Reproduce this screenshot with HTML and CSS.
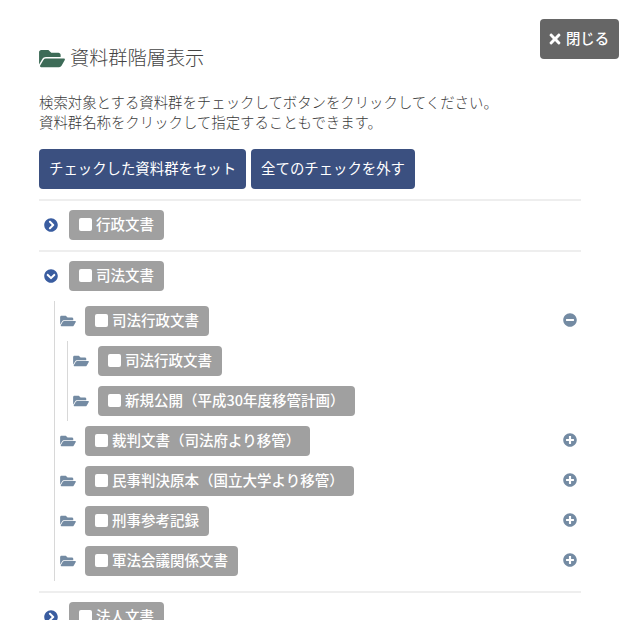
FILE: index.html
```html
<!DOCTYPE html>
<html lang="ja">
<head>
    <meta charset="UTF-8">
    <title>資料群階層表示</title>
    <link rel="stylesheet" href="styles.css">
</head>
<body>
    <svg class="sprite" xmlns="http://www.w3.org/2000/svg">
        <symbol id="i-folder" viewBox="0 0 576 512"><path d="M572.694 292.093L500.27 416.248A63.997 63.997 0 0 1 444.989 448H45.025c-18.523 0-30.064-20.093-20.731-36.093l72.424-124.155A64 64 0 0 1 152 256h399.964c18.523 0 30.064 20.093 20.73 36.093zM152 224h328v-48c0-26.51-21.49-48-48-48H272l-64-64H48C21.49 64 0 85.49 0 112v278.046l69.077-118.418C86.214 242.25 117.989 224 152 224z"/></symbol>
        <symbol id="i-right" viewBox="0 0 512 512"><path d="M256 8c137 0 248 111 248 248S393 504 256 504 8 393 8 256 119 8 256 8zm113.9 231L234.4 103.5c-9.4-9.4-24.6-9.4-33.9 0l-17 17c-9.4 9.4-9.4 24.6 0 33.9L285.1 256 183.5 357.6c-9.4 9.4-9.4 24.6 0 33.9l17 17c9.4 9.4 24.6 9.4 33.9 0L369.9 273c9.4-9.4 9.4-24.6 0-34z"/></symbol>
        <symbol id="i-down" viewBox="0 0 512 512"><path d="M504 256c0 137-111 248-248 248S8 393 8 256 119 8 256 8s248 111 248 248zM273 369.9l135.5-135.5c9.4-9.4 9.4-24.6 0-33.9l-17-17c-9.4-9.4-24.6-9.4-33.9 0L256 285.1 154.4 183.5c-9.4-9.4-24.6-9.4-33.9 0l-17 17c-9.4 9.4-9.4 24.6 0 33.9L239 369.9c9.4 9.4 24.6 9.4 34 0z"/></symbol>
        <symbol id="i-plus" viewBox="0 0 512 512"><path d="M256 8C119 8 8 119 8 256s111 248 248 248 248-111 248-248S393 8 256 8zm144 276c0 6.6-5.4 12-12 12h-92v92c0 6.6-5.4 12-12 12h-56c-6.6 0-12-5.4-12-12v-92h-92c-6.6 0-12-5.4-12-12v-56c0-6.6 5.4-12 12-12h92v-92c0-6.6 5.4-12 12-12h56c6.6 0 12 5.4 12 12v92h92c6.6 0 12 5.4 12 12v56z"/></symbol>
        <symbol id="i-minus" viewBox="0 0 512 512"><path d="M256 8C119 8 8 119 8 256s111 248 248 248 248-111 248-248S393 8 256 8zM124 296c-6.6 0-12-5.4-12-12v-56c0-6.6 5.4-12 12-12h264c6.6 0 12 5.4 12 12v56c0 6.6-5.4 12-12 12H124z"/></symbol>
        <symbol id="i-times" viewBox="0 0 352 512"><path d="M242.72 256l100.07-100.07c12.28-12.28 12.28-32.19 0-44.48l-22.24-22.24c-12.28-12.28-32.19-12.28-44.48 0L176 189.28 75.93 89.21c-12.28-12.28-32.19-12.28-44.48 0L9.21 111.45c-12.28 12.28-12.28 32.19 0 44.48L109.28 256 9.21 356.07c-12.28 12.28-12.28 32.19 0 44.48l22.24 22.24c12.28 12.28 32.2 12.28 44.48 0L176 322.72l100.07 100.07c12.28 12.28 32.2 12.28 44.48 0l22.24-22.24c12.28-12.28 12.28-32.19 0-44.48L242.72 256z"/></symbol>
    </svg>

    <button class="close-btn" type="button"><svg class="close-icon"><use href="#i-times"/></svg>閉じる</button>

    <h2 class="title"><svg class="title-icon"><use href="#i-folder"/></svg>資料群階層表示</h2>

    <p class="intro">検索対象とする資料群をチェックしてボタンをクリックしてください。<br>資料群名称をクリックして指定することもできます。</p>

    <div class="actions">
        <button class="btn" type="button">チェックした資料群をセット</button>
        <button class="btn" type="button">全てのチェックを外す</button>
    </div>

    <ul class="tree">
        <li class="top">
            <div class="row">
                <svg class="toggle"><use href="#i-right"/></svg>
                <span class="tag"><span class="check"></span>行政文書</span>
            </div>
        </li>
        <li class="top">
            <div class="row">
                <svg class="toggle"><use href="#i-down"/></svg>
                <span class="tag"><span class="check"></span>司法文書</span>
            </div>
            <ul class="sub">
                <li>
                    <div class="row">
                        <svg class="folder"><use href="#i-folder"/></svg>
                        <span class="tag"><span class="check"></span>司法行政文書</span>
                        <svg class="expand"><use href="#i-minus"/></svg>
                    </div>
                    <ul class="sub nested">
                        <li>
                            <div class="row">
                                <svg class="folder"><use href="#i-folder"/></svg>
                                <span class="tag"><span class="check"></span>司法行政文書</span>
                            </div>
                        </li>
                        <li>
                            <div class="row">
                                <svg class="folder"><use href="#i-folder"/></svg>
                                <span class="tag"><span class="check"></span>新規公開（平成30年度移管計画）</span>
                            </div>
                        </li>
                    </ul>
                </li>
                <li>
                    <div class="row">
                        <svg class="folder"><use href="#i-folder"/></svg>
                        <span class="tag"><span class="check"></span>裁判文書（司法府より移管）</span>
                        <svg class="expand"><use href="#i-plus"/></svg>
                    </div>
                </li>
                <li>
                    <div class="row">
                        <svg class="folder"><use href="#i-folder"/></svg>
                        <span class="tag"><span class="check"></span>民事判決原本（国立大学より移管）</span>
                        <svg class="expand"><use href="#i-plus"/></svg>
                    </div>
                </li>
                <li>
                    <div class="row">
                        <svg class="folder"><use href="#i-folder"/></svg>
                        <span class="tag"><span class="check"></span>刑事参考記録</span>
                        <svg class="expand"><use href="#i-plus"/></svg>
                    </div>
                </li>
                <li>
                    <div class="row">
                        <svg class="folder"><use href="#i-folder"/></svg>
                        <span class="tag"><span class="check"></span>軍法会議関係文書</span>
                        <svg class="expand"><use href="#i-plus"/></svg>
                    </div>
                </li>
            </ul>
        </li>
        <li class="top">
            <div class="row">
                <svg class="toggle"><use href="#i-right"/></svg>
                <span class="tag"><span class="check"></span>法人文書</span>
            </div>
        </li>
    </ul>
</body>
</html>
```

FILE: styles.css
```css
html, body {
    height: 620px;
    overflow: hidden;
}

body {
    margin: 0;
    padding: 0 40px 0 39px;
    font-family: "Noto Sans CJK JP", "Noto Sans", sans-serif;
    font-size: 14.4px;
    color: #444;
    background-color: #fff;
}

.sprite {
    display: none;
}

button {
    font-family: inherit;
    cursor: pointer;
}

.close-btn {
    position: absolute;
    top: 19px;
    left: 540px;
    width: 79px;
    height: 40px;
    padding: 0 1px 4px 0;
    display: flex;
    align-items: center;
    justify-content: center;
    border: 0;
    border-radius: 4px;
    background-color: #666;
    color: #fff;
    font-size: 14.4px;
    font-weight: 500;
}

.close-icon {
    width: 12px;
    height: 16px;
    margin: 4px 5px 0 0;
    fill: #fff;
}

.title {
    display: flex;
    align-items: center;
    height: 28px;
    margin: 0;
    padding-top: 43px;
    font-size: 19.2px;
    font-weight: 300;
    line-height: 26px;
    color: #444;
}

.title-icon {
    width: 26px;
    height: 23px;
    margin: 2px 5px 0 0;
    fill: #3d6b57;
}

.intro {
    margin: 21px 0 0;
    line-height: 20px;
    font-weight: 300;
    color: #3a3a3a;
}

.actions {
    display: flex;
    gap: 5px;
    margin-top: 17px;
}

.btn {
    height: 40px;
    padding: 0 10px 4px;
    border: 0;
    border-radius: 4px;
    background-color: #3b5080;
    color: #fff;
    font-size: 14.4px;
}

.tree, .sub {
    list-style: none;
    margin: 0;
    padding: 0;
}

.tree {
    margin-top: 10px;
}

.top {
    padding: 9px 0 10px;
    border-top: 2px solid #eee;
}

.row {
    display: flex;
    align-items: center;
}

.toggle {
    width: 14px;
    height: 14px;
    margin: 0 11px 0 5px;
    fill: #3a5da0;
}

.tag {
    display: inline-flex;
    align-items: center;
    box-sizing: border-box;
    height: 30px;
    padding: 0 10px 4px;
    border-radius: 4px;
    background-color: #a0a0a0;
    color: #fff;
    font-size: 14.5px;
    font-weight: 500;
    white-space: nowrap;
}

.check {
    width: 13px;
    height: 13px;
    margin: 3px 4px 0 0;
    border-radius: 2px;
    background-color: #fff;
}

.sub {
    margin: 10px 0 0 15px;
    border-left: 1px solid #d8d8d8;
}

.sub .row {
    padding: 5px 4px 5px 5px;
}

.sub.nested {
    margin: 0 0 0 12px;
}

.folder {
    width: 16px;
    height: 14px;
    margin: -1px 9px 0 0;
    fill: #748ba3;
}

.expand {
    width: 14px;
    height: 14px;
    margin: -3px 0 0 auto;
    fill: #748ba3;
}
```
